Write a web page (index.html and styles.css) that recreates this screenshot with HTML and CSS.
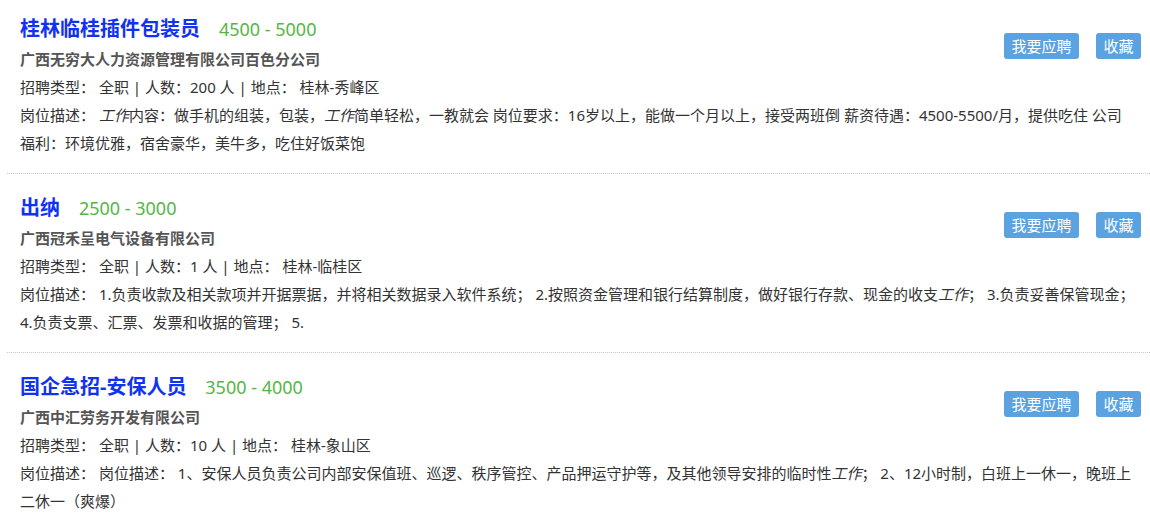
FILE: index.html
```html
<!DOCTYPE html>
<html lang="zh-CN">
<head>
    <meta charset="UTF-8">
    <meta name="viewport" content="width=device-width, initial-scale=1.0">
    <title>职位列表</title>
    <link rel="stylesheet" href="styles.css">
</head>
<body>

<div class="job-list">
    <div class="job-item">
        <div class="job-actions">
            <a class="btn" href="#">我要应聘</a>
            <a class="btn" href="#">收藏</a>
        </div>
        <div class="job-title">
            <a href="#">桂林临桂插件包装员</a>
            <span class="salary">4500 - 5000</span>
        </div>
        <div class="company">广西无穷大人力资源管理有限公司百色分公司</div>
        <div class="job-meta">招聘类型： 全职 | 人数：200 人 | 地点： 桂林-秀峰区</div>
        <div class="job-desc">岗位描述： <i>工作</i>内容：做手机的组装，包装，<i>工作</i>简单轻松，一教就会 岗位要求：16岁以上，能做一个月以上，接受两班倒 薪资待遇：4500-5500/月，提供吃住 公司<br>福利：环境优雅，宿舍豪华，美牛多，吃住好饭菜饱</div>
    </div>

    <div class="job-item">
        <div class="job-actions">
            <a class="btn" href="#">我要应聘</a>
            <a class="btn" href="#">收藏</a>
        </div>
        <div class="job-title">
            <a href="#">出纳</a>
            <span class="salary">2500 - 3000</span>
        </div>
        <div class="company">广西冠禾呈电气设备有限公司</div>
        <div class="job-meta">招聘类型： 全职 | 人数：1 人 | 地点： 桂林-临桂区</div>
        <div class="job-desc">岗位描述： 1.负责收款及相关款项并开据票据，并将相关数据录入软件系统； 2.按照资金管理和银行结算制度，做好银行存款、现金的收支<i>工作</i>； 3.负责妥善保管现金； 4.负责支票、汇票、发票和收据的管理； 5.</div>
    </div>

    <div class="job-item">
        <div class="job-actions">
            <a class="btn" href="#">我要应聘</a>
            <a class="btn" href="#">收藏</a>
        </div>
        <div class="job-title">
            <a href="#">国企急招-安保人员</a>
            <span class="salary">3500 - 4000</span>
        </div>
        <div class="company">广西中汇劳务开发有限公司</div>
        <div class="job-meta">招聘类型： 全职 | 人数：10 人 | 地点： 桂林-象山区</div>
        <div class="job-desc">岗位描述： 岗位描述： 1、安保人员负责公司内部安保值班、巡逻、秩序管控、产品押运守护等，及其他领导安排的临时性<i>工作</i>； 2、12小时制，白班上一休一，晚班上二休一（爽爆）</div>
    </div>
</div>

</body>
</html>
```

FILE: styles.css
```css
body {
    font-family: "Noto Sans", "Noto Sans CJK SC", sans-serif;
    margin: 0;
    background-color: #fff;
    color: #333;
    font-size: 15px;
}

.job-list {
    margin-top: -5px;
    padding-left: 7px;
}

.job-item {
    padding: 19px 12px 16px 13px;
    border-bottom: 1px dotted #c8c8c8;
    line-height: 28px;
}

.job-item::after {
    content: "";
    display: block;
    clear: both;
}

.job-actions {
    float: right;
    display: flex;
    gap: 17px;
    margin-top: 19px;
    margin-right: -3px;
}

.btn {
    display: block;
    height: 26px;
    line-height: 26px;
    padding: 0 7.5px;
    background-color: #5ba3e0;
    color: #fff;
    border-radius: 3px;
    text-decoration: none;
}

.job-title {
    line-height: 30px;
}

.job-title a {
    font-size: 20px;
    font-weight: bold;
    color: #1232f2;
    text-decoration: none;
}

.salary {
    font-size: 18px;
    color: #55b646;
    margin-left: 15px;
}

.company {
    font-weight: bold;
    color: #555;
}

.job-desc i {
    font-style: italic;
}
```
